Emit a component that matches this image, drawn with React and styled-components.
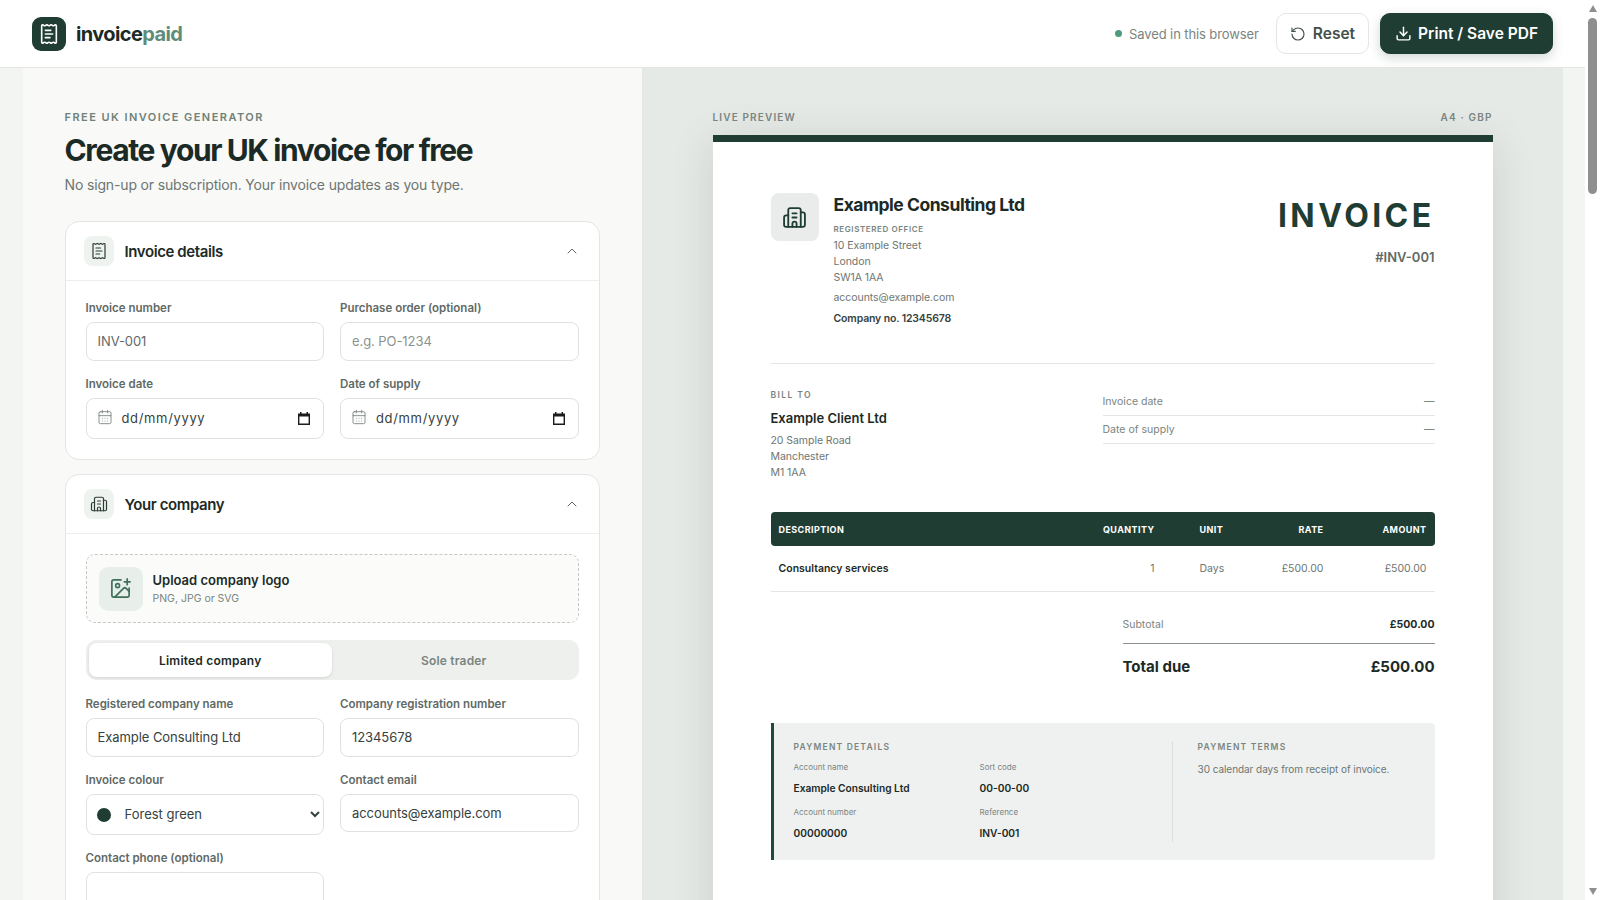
import React from "react";
import styled, { createGlobalStyle } from "styled-components";
import { ReceiptText, Building2, ChevronUp, ImagePlus, RotateCcw, Download, CalendarDays } from "lucide-react";

const FOREST = "#1f3d33";
const SANS = `Inter, "Noto Sans", sans-serif`;

const GlobalStyle = createGlobalStyle`
  * { box-sizing: border-box; }
  html { background: #f3f5f3; }
  body {
    margin: 0;
    padding-right: 15px;
    font-family: ${SANS};
    color: #1c2a26;
    background: #f3f5f3;
  }
  input, select { font-family: inherit; }
`;

const Scrollbar = styled.div`
  position: fixed;
  top: 0;
  right: 0;
  bottom: 0;
  width: 15px;
  padding: 5px 0;
  display: flex;
  flex-direction: column;
  align-items: center;
  background: #fff;
`;

const ScrollArrow = styled.div`
  width: 0;
  height: 0;
  border-left: 4.5px solid transparent;
  border-right: 4.5px solid transparent;
  border-${(props) => (props.$down ? "top" : "bottom")}: 7px solid #8f8f8f;
  margin-top: ${(props) => (props.$down ? "auto" : "0")};
`;

const ScrollThumb = styled.div`
  width: 9px;
  height: 176px;
  margin-top: 6px;
  border-radius: 5px;
  background: #8f8f8f;
`;

const Topbar = styled.header`
  height: 68px;
  padding: 0 32px;
  display: flex;
  align-items: center;
  justify-content: space-between;
  background: #fff;
  border-bottom: 1px solid #e3e6e4;
`;

const Brand = styled.div`
  display: flex;
  align-items: center;
  gap: 10px;
`;

const LogoMark = styled.div`
  width: 34px;
  height: 34px;
  border-radius: 9px;
  background: ${FOREST};
  color: #fff;
  display: flex;
  align-items: center;
  justify-content: center;
`;

const Wordmark = styled.div`
  font-size: 20px;
  font-weight: 700;
  letter-spacing: -0.6px;
  color: #1c2a26;

  span {
    color: #5f8c78;
  }
`;

const TopActions = styled.div`
  display: flex;
  align-items: center;
  gap: 11px;
`;

const Saved = styled.div`
  display: flex;
  align-items: center;
  gap: 7px;
  margin-right: 6px;
  font-size: 13px;
  letter-spacing: -0.1px;
  color: #7a8580;

  &::before {
    content: "";
    width: 7px;
    height: 7px;
    border-radius: 50%;
    background: #4f9a78;
  }
`;

const Button = styled.button`
  height: 41px;
  padding: 0 ${(props) => (props.$primary ? 14 : 13)}px;
  display: flex;
  align-items: center;
  gap: ${(props) => (props.$primary ? 6 : 7)}px;
  font-family: inherit;
  font-size: 15.5px;
  font-weight: 600;
  border-radius: 10px;
  border: 1px solid ${(props) => (props.$primary ? FOREST : "#e3e6e4")};
  background: ${(props) => (props.$primary ? FOREST : "#fff")};
  color: ${(props) => (props.$primary ? "#fff" : "#44504b")};
  box-shadow: ${(props) => (props.$primary ? "0 4px 12px rgba(31,61,51,.2)" : "none")};
`;

const Shell = styled.main`
  max-width: 1540px;
  margin: 0 auto;
  display: flex;
  align-items: stretch;
`;

const Editor = styled.section`
  width: 620px;
  padding: 42px 42px 40px;
  background: #f9f9f7;
  border-right: 1px solid #e3e6e4;
`;

const Eyebrow = styled.div`
  font-size: 11px;
  line-height: 14px;
  font-weight: 600;
  letter-spacing: 1.45px;
  color: #6f8278;
`;

const Title = styled.h1`
  margin: 7px 0 0;
  font-size: 30px;
  line-height: 38px;
  font-weight: 700;
  letter-spacing: -1.38px;
  color: #1c2a26;
`;

const Lead = styled.p`
  margin: 6px 0 0;
  font-size: 14px;
  line-height: 20px;
  letter-spacing: -0.15px;
  color: #6d7672;
`;

const Card = styled.div`
  margin-top: ${(props) => props.$gap || 14}px;
  background: #fff;
  border: 1px solid #e3e6e4;
  border-radius: 14px;
`;

const CardHead = styled.div`
  height: 59px;
  padding: 0 19px 0 18px;
  display: flex;
  align-items: center;
  gap: 11px;
  border-bottom: 1px solid #edefed;
  color: #1c2a26;

  > svg:last-child {
    margin-left: auto;
    color: #5f6a66;
  }
`;

const CardIcon = styled.div`
  width: 30px;
  height: 30px;
  border-radius: 8px;
  background: #eef3f0;
  color: #2b3d36;
  display: flex;
  align-items: center;
  justify-content: center;
`;

const CardTitle = styled.div`
  font-size: 15px;
  font-weight: 600;
  letter-spacing: -0.4px;
`;

const CardBody = styled.div`
  padding: 20px;
`;

const FieldGrid = styled.div`
  display: grid;
  grid-template-columns: 1fr 1fr;
  gap: 16px;
  align-items: start;
`;

const Field = styled.div`
  display: flex;
  flex-direction: column;
  gap: 6px;
  position: relative;
`;

const Label = styled.label`
  font-size: 11.5px;
  line-height: 15px;
  font-weight: 600;
  color: #5f6a66;
`;

const Input = styled.input`
  width: 100%;
  height: 38.7px;
  padding: 0 11px;
  border: 1px solid #dfe2e0;
  border-radius: 8px;
  background: #fff;
  font-size: 13px;
  letter-spacing: -0.07px;
  color: ${(props) => props.$tone || "#36423e"};
  outline: none;

  &::placeholder {
    color: #8a938f;
  }
`;

const DateBox = styled.div`
  height: 41.4px;
  padding: 0 11px 0 10px;
  display: flex;
  align-items: center;
  gap: 9px;
  border: 1px solid #dfe2e0;
  border-radius: 8px;
  background: #fff;
  font-size: 13px;
  letter-spacing: 0.65px;
  color: #36423e;

  svg:first-child {
    color: #7f8884;
    transform: translateY(-1px);
  }

  svg:last-child {
    margin-left: auto;
    margin-right: 2px;
  }
`;

const Dropzone = styled.div`
  height: 69px;
  padding: 0 12px;
  display: flex;
  align-items: center;
  gap: 10px;
  border: 1px dashed #c3c9c5;
  border-radius: 9px;
  background: #fbfcfa;
`;

const DropIcon = styled.div`
  width: 44px;
  height: 44px;
  border-radius: 9px;
  background: #e8efeb;
  color: #3f6f5b;
  display: flex;
  align-items: center;
  justify-content: center;
`;

const DropTitle = styled.div`
  font-size: 13px;
  line-height: 18px;
  font-weight: 600;
  color: #1c2a26;
`;

const DropHint = styled.div`
  margin-top: 2px;
  font-size: 10.5px;
  line-height: 16px;
  color: #7a8580;
`;

const Segmented = styled.div`
  margin: 17px 0 17px;
  height: 40px;
  padding: 3px;
  display: grid;
  grid-template-columns: 1fr 1fr;
  border-radius: 10px;
  background: #eef0ee;
`;

const Segment = styled.div`
  display: flex;
  align-items: center;
  justify-content: center;
  border-radius: 8px;
  font-size: 12px;
  font-weight: 600;
  letter-spacing: 0.2px;
  color: ${(props) => (props.$active ? "#1c2a26" : "#7a8580")};
  background: ${(props) => (props.$active ? "#fff" : "transparent")};
  box-shadow: ${(props) => (props.$active ? "0 1px 3px rgba(0,0,0,.12)" : "none")};
`;

const Swatch = styled.span`
  position: absolute;
  left: 11px;
  bottom: 13px;
  width: 14px;
  height: 14px;
  border-radius: 50%;
  background: ${FOREST};
`;

const ColourSelect = styled.select`
  width: 100%;
  height: 41px;
  padding: 0 4px 0 34px;
  border: 1px solid #dfe2e0;
  border-radius: 8px;
  background: #fff;
  font-size: 13px;
  color: #36423e;
`;

const Preview = styled.section`
  width: 920px;
  padding: 42px 70px 60px;
  background: #e6eae7;
`;

const PreviewHead = styled.div`
  display: flex;
  justify-content: space-between;
  height: 25px;
  font-size: 10px;
  line-height: 14px;
  font-weight: 600;
  letter-spacing: 1.15px;
  color: #7a8580;
`;

const Sheet = styled.article`
  height: 1103px;
  padding: 51px 58px 0;
  background: #fff;
  border-top: 7px solid ${FOREST};
  box-shadow: 0 8px 40px rgba(20, 40, 30, 0.14);
`;

const SheetTop = styled.div`
  display: flex;
  justify-content: space-between;
  height: 171px;
  border-bottom: 1px solid #e3e6e4;
`;

const Company = styled.div`
  display: flex;
  gap: 15px;
`;

const CompanyLogo = styled.div`
  width: 48px;
  height: 48px;
  border-radius: 8px;
  background: #e9eceb;
  color: ${FOREST};
  display: flex;
  align-items: center;
  justify-content: center;
`;

const CompanyName = styled.div`
  font-size: 17.5px;
  line-height: 24px;
  font-weight: 700;
  letter-spacing: -0.47px;
  color: #1c2a26;
`;

const TinyLabel = styled.div`
  font-size: ${(props) => props.$size || 8}px;
  line-height: 12px;
  font-weight: 600;
  letter-spacing: ${(props) => props.$track || 0.6}px;
  color: #7a8580;
  margin-top: ${(props) => props.$top || 0}px;
`;

const AddressLine = styled.div`
  font-size: 10.5px;
  line-height: 16px;
  letter-spacing: -0.05px;
  color: #6d7672;
  margin-top: ${(props) => props.$top || 0}px;
`;

const CompanyNo = styled.div`
  margin-top: 6px;
  font-size: 10.5px;
  line-height: 14px;
  font-weight: 600;
  letter-spacing: -0.15px;
  color: #36423e;
`;

const DocHead = styled.div`
  text-align: right;
`;

const DocTitle = styled.div`
  margin-top: 1px;
  font-size: 32px;
  line-height: 44px;
  font-weight: 700;
  letter-spacing: 3.4px;
  color: ${FOREST};
`;

const DocNumber = styled.div`
  margin-top: 10px;
  font-size: 13px;
  line-height: 18px;
  font-weight: 600;
  color: #5f6a66;
`;

const BillRow = styled.div`
  display: flex;
  justify-content: space-between;
  padding-top: 25px;
  height: 148px;
`;

const ClientName = styled.div`
  margin: 7px 0 5px;
  font-size: 13px;
  line-height: 20px;
  font-weight: 600;
  color: #1c2a26;
`;

const MetaList = styled.div`
  width: 332px;
  margin-top: -1px;
`;

const MetaRow = styled.div`
  height: 28px;
  display: flex;
  align-items: center;
  justify-content: space-between;
  border-bottom: 1px solid #e3e6e4;
  font-size: 10.5px;
  color: #7a8580;

  span:last-child {
    color: #5f6a66;
  }
`;

const TableHead = styled.div`
  height: 34px;
  padding: 0 8px;
  display: grid;
  grid-template-columns: 1fr 81px 75px 94px 103px;
  align-items: center;
  border-radius: 4px;
  background: ${FOREST};
  color: #fff;
  font-size: 9px;
  font-weight: 700;
  letter-spacing: 0.42px;
`;

const TableRow = styled.div`
  height: 45.5px;
  padding: 0 8px;
  display: grid;
  grid-template-columns: 1fr 81px 75px 94px 103px;
  align-items: center;
  border-bottom: 1px solid #e3e6e4;
  font-size: 10.5px;
  color: #6d7672;
`;

const Cell = styled.div`
  text-align: ${(props) => (props.$right ? "right" : "left")};
  padding-left: ${(props) => props.$inset || 0}px;
  font-weight: ${(props) => (props.$strong ? 600 : "inherit")};
  color: ${(props) => (props.$strong ? "#1c2a26" : "inherit")};
`;

const Totals = styled.div`
  width: 312px;
  margin: 26.5px 0 0 auto;
`;

const SubtotalRow = styled.div`
  height: 26px;
  display: flex;
  justify-content: space-between;
  font-size: 10.5px;
  color: #7a8580;
  border-bottom: 1px solid #8a938f;

  b {
    font-weight: 700;
    color: #1c2a26;
  }
`;

const TotalRow = styled.div`
  margin-top: 11.5px;
  display: flex;
  justify-content: space-between;
  font-size: 15px;
  line-height: 22px;
  font-weight: 700;
  color: #1c2a26;
`;

const PayBox = styled.div`
  margin-top: 45.5px;
  height: 137px;
  padding: 18px 22px 18px 20px;
  display: flex;
  background: #eff1f0;
  border-left: 3px solid #1f4a3d;
  border-radius: 0 4px 4px 0;
`;

const PayDetails = styled.div`
  width: 379px;
  border-right: 1px solid #dcdfdd;
`;

const PayGrid = styled.div`
  margin-top: 8px;
  display: grid;
  grid-template-columns: 186px 1fr;
  row-gap: 11px;
`;

const PayKey = styled.div`
  font-size: 8px;
  line-height: 12px;
  color: #7a8580;
`;

const PayValue = styled.div`
  margin-top: 8px;
  font-size: 10.2px;
  line-height: 14px;
  font-weight: 600;
  color: #1c2a26;
`;

const PayTerms = styled.div`
  padding-left: 25px;
`;

const TermsText = styled.div`
  margin-top: 9px;
  font-size: 10px;
  line-height: 14px;
  letter-spacing: -0.05px;
  color: #6d7672;
`;

const PickerGlyph = () => (
  <svg width="12" height="13" viewBox="0 0 12 13" fill="#1c1c1c">
    <path d="M2 0h1.5v1.5h5V0H10v1.5h2V13H0V1.5h2zM1.4 4.6v7h9.2v-7z" />
  </svg>
);

const DateField = ({ label }) => (
  <Field>
    <Label>{label}</Label>
    <DateBox>
      <CalendarDays size={16} strokeWidth={1.4} />
      <span>dd/mm/yyyy</span>
      <PickerGlyph />
    </DateBox>
  </Field>
);

const Pay = ({ name, value }) => (
  <div>
    <PayKey>{name}</PayKey>
    <PayValue>{value}</PayValue>
  </div>
);

export default function App() {
  return (
    <>
      <GlobalStyle />
      <Topbar>
        <Brand>
          <LogoMark>
            <ReceiptText size={22} strokeWidth={1.75} />
          </LogoMark>
          <Wordmark>
            invoice<span>paid</span>
          </Wordmark>
        </Brand>
        <TopActions>
          <Saved>Saved in this browser</Saved>
          <Button>
            <RotateCcw size={16} strokeWidth={1.75} />
            Reset
          </Button>
          <Button $primary>
            <Download size={17} strokeWidth={2} />
            Print / Save PDF
          </Button>
        </TopActions>
      </Topbar>
      <Shell>
        <Editor>
          <Eyebrow>FREE UK INVOICE GENERATOR</Eyebrow>
          <Title>Create your UK invoice for free</Title>
          <Lead>No sign-up or subscription. Your invoice updates as you type.</Lead>

          <Card $gap={26}>
            <CardHead>
              <CardIcon>
                <ReceiptText size={18} strokeWidth={1.6} />
              </CardIcon>
              <CardTitle>Invoice details</CardTitle>
              <ChevronUp size={16} strokeWidth={1.5} />
            </CardHead>
            <CardBody>
              <FieldGrid>
                <Field>
                  <Label>Invoice number</Label>
                  <Input defaultValue="INV-001" $tone="#5f6a66" />
                </Field>
                <Field>
                  <Label>Purchase order (optional)</Label>
                  <Input placeholder="e.g. PO-1234" />
                </Field>
                <DateField label="Invoice date" />
                <DateField label="Date of supply" />
              </FieldGrid>
            </CardBody>
          </Card>

          <Card>
            <CardHead>
              <CardIcon>
                <Building2 size={18} strokeWidth={1.6} />
              </CardIcon>
              <CardTitle>Your company</CardTitle>
              <ChevronUp size={16} strokeWidth={1.5} />
            </CardHead>
            <CardBody>
              <Dropzone>
                <DropIcon>
                  <ImagePlus size={23} strokeWidth={1.75} />
                </DropIcon>
                <div>
                  <DropTitle>Upload company logo</DropTitle>
                  <DropHint>PNG, JPG or SVG</DropHint>
                </div>
              </Dropzone>
              <Segmented>
                <Segment $active>Limited company</Segment>
                <Segment>Sole trader</Segment>
              </Segmented>
              <FieldGrid>
                <Field>
                  <Label>Registered company name</Label>
                  <Input defaultValue="Example Consulting Ltd" />
                </Field>
                <Field>
                  <Label>Company registration number</Label>
                  <Input defaultValue="12345678" />
                </Field>
                <Field>
                  <Label>Invoice colour</Label>
                  <ColourSelect defaultValue="forest">
                    <option value="forest">Forest green</option>
                  </ColourSelect>
                  <Swatch />
                </Field>
                <Field>
                  <Label>Contact email</Label>
                  <Input defaultValue="accounts@example.com" />
                </Field>
                <Field>
                  <Label>Contact phone (optional)</Label>
                  <Input />
                </Field>
              </FieldGrid>
            </CardBody>
          </Card>
        </Editor>

        <Preview>
          <PreviewHead>
            <span>LIVE PREVIEW</span>
            <span>A4 · GBP</span>
          </PreviewHead>
          <Sheet>
            <SheetTop>
              <Company>
                <CompanyLogo>
                  <Building2 size={25} strokeWidth={1.75} />
                </CompanyLogo>
                <div>
                  <CompanyName>Example Consulting Ltd</CompanyName>
                  <TinyLabel $top={6}>REGISTERED OFFICE</TinyLabel>
                  <AddressLine $top={3}>10 Example Street</AddressLine>
                  <AddressLine>London</AddressLine>
                  <AddressLine>SW1A 1AA</AddressLine>
                  <AddressLine $top={4}>accounts@example.com</AddressLine>
                  <CompanyNo>Company no. 12345678</CompanyNo>
                </div>
              </Company>
              <DocHead>
                <DocTitle>INVOICE</DocTitle>
                <DocNumber>#INV-001</DocNumber>
              </DocHead>
            </SheetTop>
            <BillRow>
              <div>
                <TinyLabel $size={8.5} $track={1.4}>BILL TO</TinyLabel>
                <ClientName>Example Client Ltd</ClientName>
                <AddressLine>20 Sample Road</AddressLine>
                <AddressLine>Manchester</AddressLine>
                <AddressLine>M1 1AA</AddressLine>
              </div>
              <MetaList>
                <MetaRow><span>Invoice date</span><span>—</span></MetaRow>
                <MetaRow><span>Date of supply</span><span>—</span></MetaRow>
              </MetaList>
            </BillRow>
            <TableHead>
              <Cell>DESCRIPTION</Cell>
              <Cell $right>QUANTITY</Cell>
              <Cell $inset={45}>UNIT</Cell>
              <Cell $right>RATE</Cell>
              <Cell $right>AMOUNT</Cell>
            </TableHead>
            <TableRow>
              <Cell $strong>Consultancy services</Cell>
              <Cell $right>1</Cell>
              <Cell $inset={45}>Days</Cell>
              <Cell $right>£500.00</Cell>
              <Cell $right>£500.00</Cell>
            </TableRow>
            <Totals>
              <SubtotalRow>
                <span>Subtotal</span>
                <b>£500.00</b>
              </SubtotalRow>
              <TotalRow>
                <span>Total due</span>
                <span>£500.00</span>
              </TotalRow>
            </Totals>
            <PayBox>
              <PayDetails>
                <TinyLabel $size={8.5} $track={1.2}>PAYMENT DETAILS</TinyLabel>
                <PayGrid>
                  <Pay name="Account name" value="Example Consulting Ltd" />
                  <Pay name="Sort code" value="00-00-00" />
                  <Pay name="Account number" value="00000000" />
                  <Pay name="Reference" value="INV-001" />
                </PayGrid>
              </PayDetails>
              <PayTerms>
                <TinyLabel $size={8.5} $track={1.2}>PAYMENT TERMS</TinyLabel>
                <TermsText>30 calendar days from receipt of invoice.</TermsText>
              </PayTerms>
            </PayBox>
          </Sheet>
        </Preview>
      </Shell>
      <Scrollbar>
        <ScrollArrow />
        <ScrollThumb />
        <ScrollArrow $down />
      </Scrollbar>
    </>
  );
}
